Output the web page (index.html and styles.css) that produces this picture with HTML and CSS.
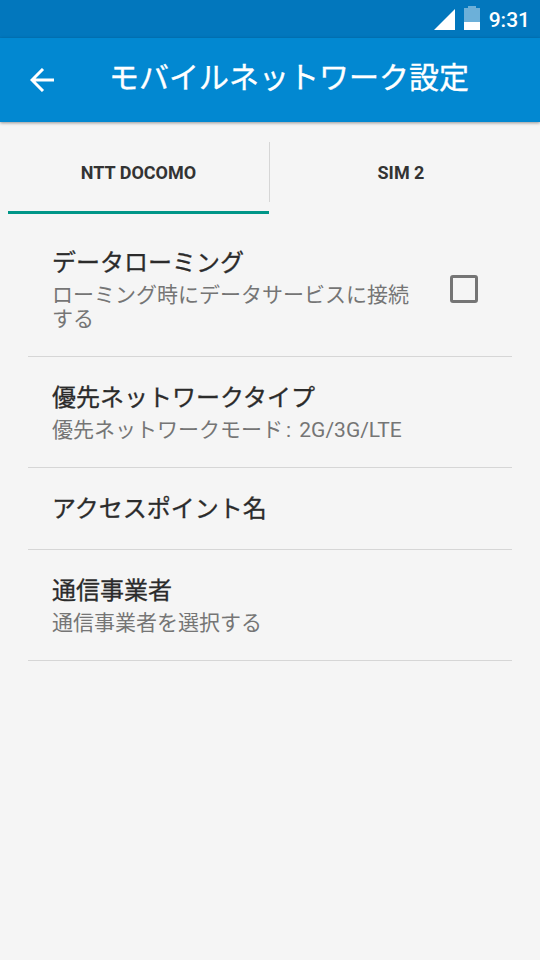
FILE: index.html
```html
<!DOCTYPE html>
<html lang="ja">
<head>
<meta charset="utf-8">
<title>モバイルネットワーク設定</title>
<link rel="stylesheet" href="styles.css">
</head>
<body>
<div class="status">
  <svg class="signal" width="21" height="21" viewBox="0 0 21 21"><path d="M21 0V21H0Z" fill="#fff"/></svg>
  <svg class="battery" width="16" height="24" viewBox="0 0 16 24"><path d="M4 0h8v2h4v14H0V2h4z" fill="#fff" fill-opacity=".42"/><path d="M0 16h16v8H0z" fill="#fff"/></svg>
  <span class="clock">9:31</span>
</div>
<header class="bar">
  <svg class="back" width="24" height="24" viewBox="0 0 24 24" fill="none" stroke="#fff" stroke-width="3"><path d="M24 12H2M13 1L2 12L13 23"/></svg>
  <h1>モバイルネットワーク設定</h1>
</header>
<nav class="tabs">
  <div class="tab active">NTT DOCOMO</div>
  <div class="divider"></div>
  <div class="tab">SIM 2</div>
</nav>
<main class="list">
  <section class="row roaming">
    <div class="text"><h2>データローミング</h2><p>ローミング時にデータサービスに接続する</p></div>
    <span class="check"></span>
  </section>
  <section class="row"><div class="text"><h2>優先ネットワークタイプ</h2><p>優先ネットワークモード<span class="colon">:</span> 2G/3G/LTE</p></div></section>
  <section class="row single"><div class="text"><h2>アクセスポイント名</h2></div></section>
  <section class="row"><div class="text"><h2>通信事業者</h2><p>通信事業者を選択する</p></div></section>
</main>
</body>
</html>
```
FILE: styles.css
```css
* { box-sizing: border-box; margin: 0; padding: 0; }
body { width: 540px; height: 960px; background: #f5f5f5; font-family: Roboto, "Noto Sans CJK JP", sans-serif; overflow: hidden; }
.status { height: 38px; background: #0277bd; display: flex; justify-content: flex-end; align-items: flex-start; padding: 6px 10px 0 0; color: #fff; }
.signal { margin: 3px 9px 0 0; }
.battery { margin-right: 9px; }
.clock { font-size: 21px; line-height: 26px; font-weight: 500; margin-top: 1px; }
.bar { height: 84px; background: #0288d1; display: flex; align-items: center; padding-left: 30px; box-shadow: 0 1px 3px rgba(0,0,0,.4); color: #fff; }
.bar h1 { font-size: 30px; line-height: 40px; font-weight: 400; -webkit-text-stroke: .35px currentColor; margin: -4px 0 0 55px; white-space: nowrap; }
.tabs { height: 92px; display: grid; grid-template-columns: 261px 1px 262px; padding: 0 8px; }
.tab { display: flex; align-items: center; justify-content: center; font-size: 18px; font-weight: 700; color: #333; padding-top: 12px; border-bottom: 3px solid transparent; }
.active { border-color: #009688; }
.divider { width: 1px; height: 60px; margin-top: 20px; background: #d6d6d6; }
.list { padding: 8px 28px 0; }
.row { height: 111px; border-bottom: 1px solid #d6d6d6; padding: 25px 0 0 24px; display: flex; }
.roaming { height: 135px; }
.single { height: 82px; }
.row h2 { font-size: 24px; line-height: 32px; font-weight: 400; -webkit-text-stroke: .3px currentColor; color: #2b2b2b; white-space: nowrap; }
.row p { font-size: 21px; line-height: 24px; color: #757575; margin-top: 4px; }
.colon { padding: 0 3px; }
.roaming .text { width: 365px; }
.check { width: 28px; height: 28px; border: 3px solid #757575; border-radius: 3px; margin: 28px 0 0 33px; }
```
